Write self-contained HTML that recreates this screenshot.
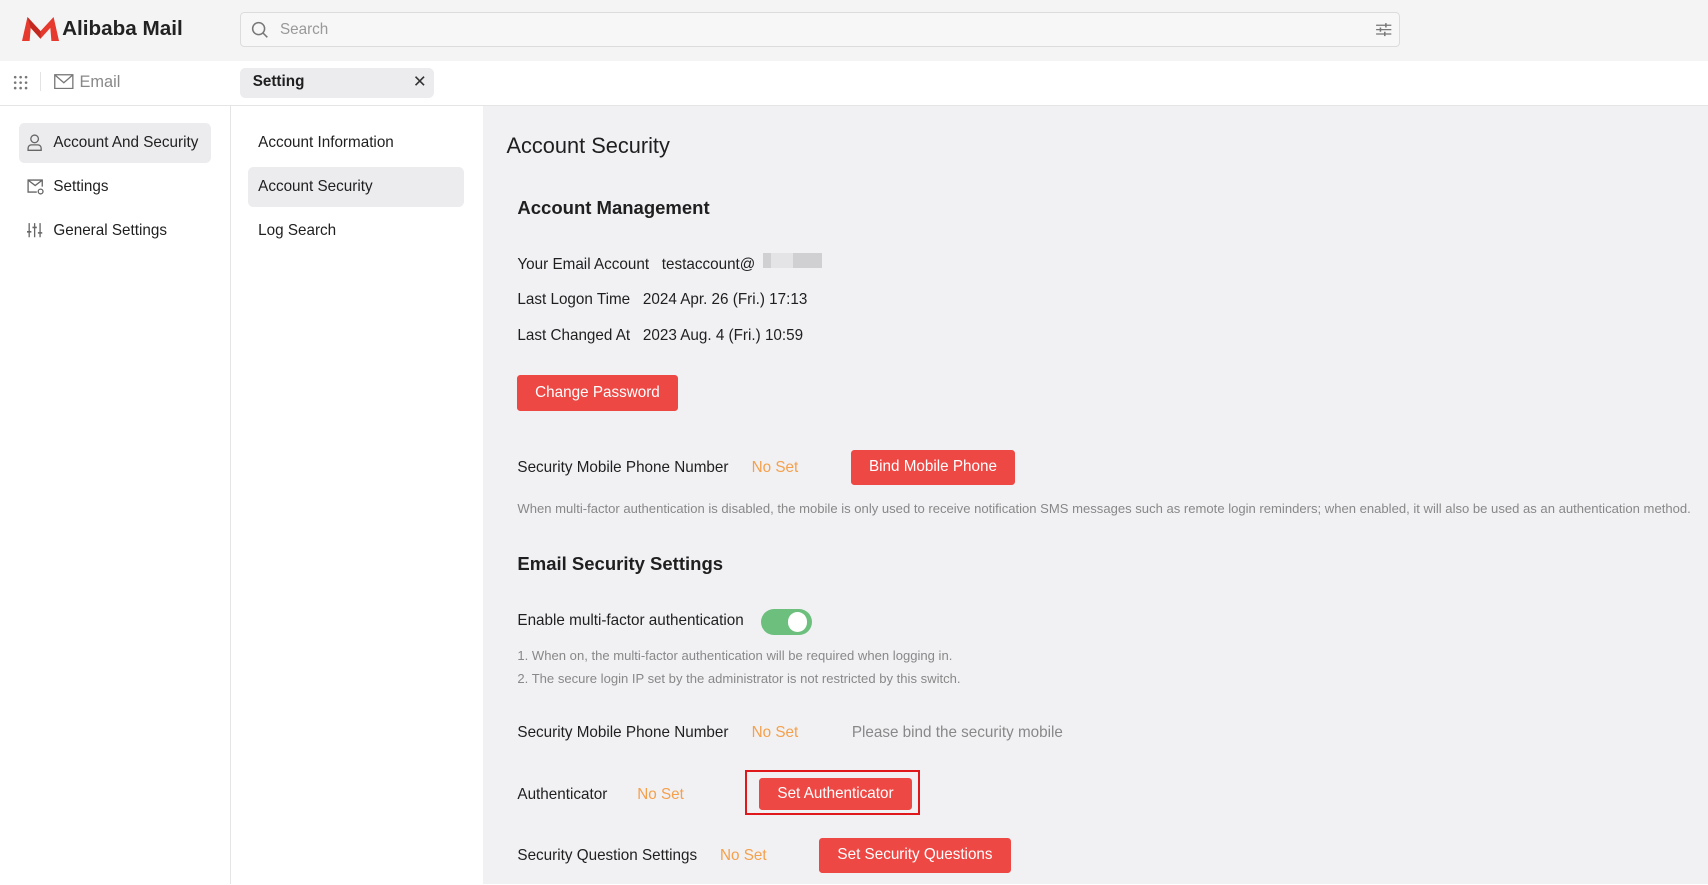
<!DOCTYPE html>
<html><head><meta charset="utf-8"><style>
html,body{margin:0;padding:0;overflow:hidden;width:1708px;height:885px;background:#fff}
#r{zoom:1.08929;width:1568px;height:812px;position:relative;font-family:"Liberation Sans",Arial,sans-serif;color:#1f1f1f;font-size:14px}
.a{position:absolute;white-space:nowrap}
.btn{position:absolute;background:#ee4845;color:#fff;border-radius:3px;font-size:14px;text-align:center}
.org{color:#f5a04b}
.gray{color:#888}
</style></head><body><div id="r">
<div class="a" style="left:0;top:0;width:1568px;height:56px;background:#f4f4f4"></div>
<svg class="a" style="left:20px;top:16px" width="34" height="22" viewBox="0 0 34 22"><path d="M0 22 L5 0 L17 13 L29 0 L34 22 L27 22 L26 10 L17 20 L8 10 L7 22Z" fill="#e63a2e"/><path d="M5 0 L17 13 L17 20 L8 10Z" fill="#c2281f"/></svg>
<div class="a" style="left:57px;top:16px;font-size:19px;font-weight:bold;color:#222">Alibaba Mail</div>
<div class="a" style="left:220px;top:11px;width:1063px;height:30px;border:1px solid #dcdcdc;border-radius:4px;background:#f7f7f7"></div>
<svg class="a" style="left:230px;top:19px" width="16" height="16" viewBox="0 0 16 16"><circle cx="7" cy="7" r="5.5" fill="none" stroke="#777" stroke-width="1.4"/><path d="M11 11l4 4" stroke="#777" stroke-width="1.4"/></svg>
<div class="a" style="left:257px;top:19px;color:#999">Search</div>
<svg class="a" style="left:1262px;top:20px" width="16" height="14" viewBox="0 0 16 14"><path d="M1 3h14M1 7h14M1 11h14" stroke="#777" stroke-width="1.2"/><path d="M10 1v4M5 5v4M9 9v4" stroke="#777" stroke-width="1.4"/></svg>
<svg class="a" style="left:12px;top:69px" width="14" height="14"><g fill="#777"><circle cx="2" cy="2" r="1.2"/><circle cx="7" cy="2" r="1.2"/><circle cx="12" cy="2" r="1.2"/><circle cx="2" cy="7" r="1.2"/><circle cx="7" cy="7" r="1.2"/><circle cx="12" cy="7" r="1.2"/><circle cx="2" cy="12" r="1.2"/><circle cx="7" cy="12" r="1.2"/><circle cx="12" cy="12" r="1.2"/></g></svg>
<div class="a" style="left:37px;top:66px;width:1px;height:18px;background:#e3e3e3"></div>
<svg class="a" style="left:50px;top:68px" width="18" height="14"><rect x=".7" y=".7" width="16.6" height="12.6" fill="none" stroke="#777" stroke-width="1.2"/><path d="M1 1l8 7 8-7" fill="none" stroke="#777" stroke-width="1.2"/></svg>
<div class="a gray" style="left:73px;top:67px;font-size:15px">Email</div>
<div class="a" style="left:220px;top:62px;width:178px;height:28px;background:#ececef;border-radius:5px"></div>
<div class="a" style="left:232px;top:67px;font-weight:bold">Setting</div>
<div class="a" style="left:379px;top:66px;font-size:15px;color:#333">✕</div>
<div class="a" style="left:0;top:96px;width:1568px;height:1px;background:#e5e5e5"></div>
<div class="a" style="left:211px;top:97px;width:1px;height:715px;background:#e5e5e5"></div>
<div class="a" style="left:443px;top:97px;width:1125px;height:715px;background:#f1f1f4"></div>
<div class="a" style="left:17px;top:113px;width:177px;height:37px;background:#ececef;border-radius:5px"></div>
<svg class="a" style="left:25px;top:123px" width="14" height="16"><circle cx="7" cy="4.5" r="3.5" fill="none" stroke="#666" stroke-width="1.2"/><path d="M1 15v-2a3 3 0 0 1 3-3h6a3 3 0 0 1 3 3v2z" fill="none" stroke="#666" stroke-width="1.2"/></svg>
<div class="a" style="left:49px;top:123px">Account And Security</div>
<svg class="a" style="left:25px;top:164px" width="16" height="15"><path d="M9 12H1V1h13v6M1 1l6.5 5 6.5-5" fill="none" stroke="#666" stroke-width="1.2"/><circle cx="12.5" cy="11.5" r="2.2" fill="none" stroke="#666" stroke-width="1.2"/></svg>
<div class="a" style="left:49px;top:163px">Settings</div>
<svg class="a" style="left:25px;top:204px" width="15" height="15"><path d="M2 1v13M7 1v13M12 1v13" stroke="#666" stroke-width="1.2"/><path d="M0 9h4M5 5h4M10 10h4" stroke="#666" stroke-width="1.4"/></svg>
<div class="a" style="left:49px;top:204px">General Settings</div>
<div class="a" style="left:237px;top:123px">Account Information</div>
<div class="a" style="left:228px;top:153px;width:198px;height:37px;background:#ececef;border-radius:5px"></div>
<div class="a" style="left:237px;top:163px">Account Security</div>
<div class="a" style="left:237px;top:204px">Log Search</div>
<div class="a" style="left:465px;top:122px;font-size:20px">Account Security</div>
<div class="a" style="left:475px;top:181px;font-size:17px;font-weight:bold">Account Management</div>
<div class="a" style="left:475px;top:235px">Your Email Account&nbsp;&nbsp; testaccount@</div>
<div class="a" style="left:700px;top:232px;width:55px;height:14px;background:#d0d0d3"></div>
<div class="a" style="left:708px;top:232px;width:20px;height:14px;background:#e4e4e6"></div>
<div class="a" style="left:475px;top:267px">Last Logon Time&nbsp;&nbsp; 2024 Apr. 26 (Fri.) 17:13</div>
<div class="a" style="left:475px;top:300px">Last Changed At&nbsp;&nbsp; 2023 Aug. 4 (Fri.) 10:59</div>
<div class="btn" style="left:475px;top:344px;width:147px;height:33px;line-height:33px">Change Password</div>
<div class="a" style="left:475px;top:421px">Security Mobile Phone Number</div>
<div class="a org" style="left:690px;top:421px">No Set</div>
<div class="btn" style="left:781px;top:413px;width:151px;height:32px;line-height:32px">Bind Mobile Phone</div>
<div class="a gray" style="left:475px;top:460px;font-size:12px">When multi-factor authentication is disabled, the mobile is only used to receive notification SMS messages such as remote login reminders; when enabled, it will also be used as an authentication method.</div>
<div class="a" style="left:475px;top:508px;font-size:17px;font-weight:bold">Email Security Settings</div>
<div class="a" style="left:475px;top:562px">Enable multi-factor authentication</div>
<div class="a" style="left:699px;top:559px;width:46px;height:24px;background:#6cbf7c;border-radius:12px"></div>
<div class="a" style="left:723px;top:562px;width:18px;height:18px;background:#fff;border-radius:50%"></div>
<div class="a gray" style="left:475px;top:595px;font-size:12px">1. When on, the multi-factor authentication will be required when logging in.</div>
<div class="a gray" style="left:475px;top:616px;font-size:12px">2. The secure login IP set by the administrator is not restricted by this switch.</div>
<div class="a" style="left:475px;top:665px">Security Mobile Phone Number</div>
<div class="a org" style="left:690px;top:665px">No Set</div>
<div class="a gray" style="left:782px;top:665px">Please bind the security mobile</div>
<div class="a" style="left:475px;top:722px">Authenticator</div>
<div class="a org" style="left:585px;top:722px">No Set</div>
<div class="a" style="left:684px;top:707px;width:161px;height:41px;border:2px solid #e0171b;box-sizing:border-box"></div>
<div class="btn" style="left:697px;top:714px;width:140px;height:30px;line-height:30px">Set Authenticator</div>
<div class="a" style="left:475px;top:778px">Security Question Settings</div>
<div class="a org" style="left:661px;top:778px">No Set</div>
<div class="btn" style="left:752px;top:769px;width:176px;height:32px;line-height:32px">Set Security Questions</div>
</div></body></html>
